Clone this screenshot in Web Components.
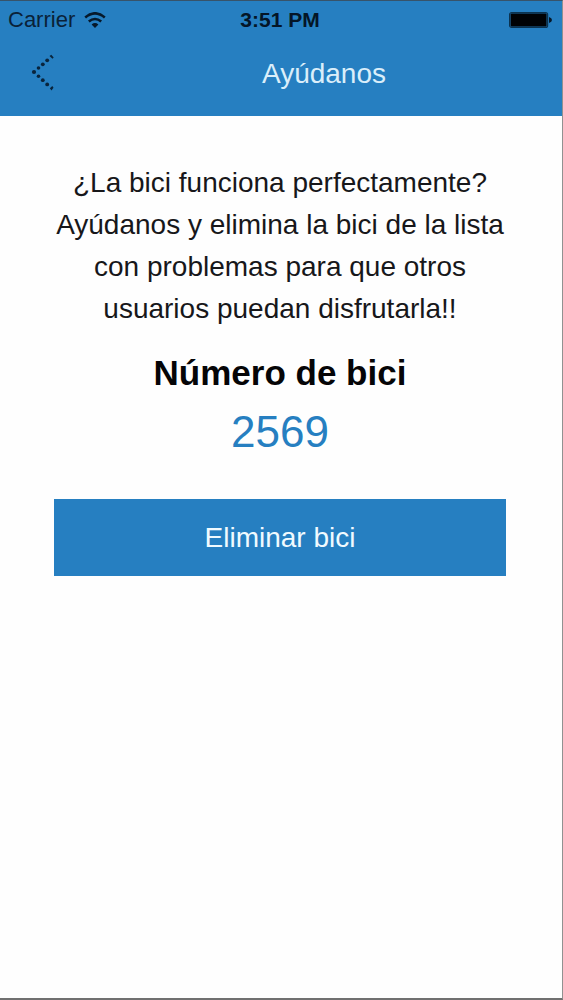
<!DOCTYPE html>
<html lang="es">
<head>
<meta charset="utf-8">
<meta name="viewport" content="width=device-width, initial-scale=1">
<title>Ayúdanos</title>
<style>
html, body {
  margin: 0;
}

body {
  font-family: "Liberation Sans", Arial, sans-serif;
  color: #17171a;
  background: #fefefe;
}
</style>
</head>
<body>
<bici-screen>
  <status-bar slot="header" carrier="Carrier" time="3:51 PM"></status-bar>
  <nav-bar slot="header">Ayúdanos</nav-bar>
  <remove-bike number="2569">
    ¿La bici funciona perfectamente? Ayúdanos y elimina la bici de la lista con problemas para que otros usuarios puedan disfrutarla!!
    <span slot="action">Eliminar bici</span>
  </remove-bike>
</bici-screen>

<script>
function attach(element, html) {
  const template = document.createElement('template');
  template.innerHTML = html;
  element.attachShadow({mode: 'open'});
  element.shadowRoot.appendChild(template.content.cloneNode(true));
}

class BiciScreen extends HTMLElement {
  constructor() {
    super();
    attach(this, `
<style>
:host {
  --blue: #267fc1;
  display: flex;
  flex-direction: column;
  box-sizing: border-box;
  min-height: 100vh;
  border-top: 1px solid #37536a;
  border-right: 1px solid #919191;
  border-bottom: 2px solid #707070;
}

header {
  background: var(--blue);
}
</style>
<header><slot name="header"></slot></header>
<main><slot></slot></main>
`);
  }
}

class StatusBar extends HTMLElement {
  constructor() {
    super();
    attach(this, `
<style>
:host {
  display: grid;
  grid-template-columns: 1fr auto 1fr;
  align-items: center;
  height: 38px;
  padding: 0 10px 0 8px;
  font-size: 22px;
  color: #0a2238;
}

.carrier {
  display: flex;
  align-items: center;
  gap: 9px;
}

.time {
  font-size: 21px;
  font-weight: bold;
  color: #041527;
}

.battery {
  justify-self: end;
}

svg {
  display: block;
}
</style>
<div class="carrier">
  <span id="carrier"></span>
  <svg width="22" height="17" viewBox="0 0 22 17" fill="none" stroke="#06192b" stroke-width="2.6" aria-hidden="true">
    <path d="M1.2 5.4Q11-2.8 20.8 5.4"/>
    <path d="M4.8 9.6Q11 4.4 17.2 9.6"/>
    <path d="M11 16L7.6 12.4Q11 9.6 14.4 12.4Z" fill="#06192b" stroke="none"/>
  </svg>
</div>
<span class="time" id="time"></span>
<svg class="battery" width="43" height="16" viewBox="0 0 43 16" aria-hidden="true">
  <rect x=".6" y=".6" width="38" height="14.8" rx="2" fill="none" stroke="#0b3350" stroke-width="1.2"/>
  <rect x="1.6" y="1.6" width="36" height="12.8" rx="1" fill="#000205"/>
  <path d="M40 5q3 1 3 3t-3 3z" fill="#06192b"/>
</svg>
`);
  }

  connectedCallback() {
    this.shadowRoot.getElementById('carrier').textContent = this.getAttribute('carrier');
    this.shadowRoot.getElementById('time').textContent = this.getAttribute('time');
  }
}

class NavBar extends HTMLElement {
  constructor() {
    super();
    attach(this, `
<style>
:host {
  display: grid;
  grid-template-columns: 86px 1fr;
  height: 77px;
}

button {
  display: flex;
  align-items: flex-start;
  justify-content: center;
  padding: 15px 0 0;
  border: 0;
  background: none;
  cursor: pointer;
}

h1 {
  margin: 0;
  padding-top: 19px;
  font-size: 28px;
  line-height: 32px;
  font-weight: normal;
  text-align: center;
  color: #daeefa;
}
</style>
<button type="button" aria-label="Volver">
  <svg width="24" height="38" viewBox="0 0 24 38" fill="#09243c">
    <circle cx="3" cy="18" r="2.1"/>
    <circle cx="7.5" cy="14" r="1.8"/>
    <circle cx="11.8" cy="10.3" r="1.9"/>
    <circle cx="16.2" cy="6.3" r="1.9"/>
    <path d="M18.5 2l1.8-1.3 2.4 2.8-1.2 1.2z"/>
    <circle cx="7.5" cy="22.2" r="1.8"/>
    <circle cx="11.8" cy="26.2" r="1.9"/>
    <circle cx="16.2" cy="30.4" r="1.9"/>
    <path d="M18.8 34.3l2.5-2.2 1.2 1.7-2 2.8z"/>
  </svg>
</button>
<h1><slot></slot></h1>
`);
  }
}

class RemoveBike extends HTMLElement {
  constructor() {
    super();
    attach(this, `
<style>
:host {
  display: block;
  padding: 46px 56px 40px 54px;
  text-align: center;
}

p, h2 {
  margin: 0;
}

p {
  font-size: 28px;
  line-height: 42px;
}

h2 {
  margin-top: 16px;
  font-size: 35px;
  line-height: 54px;
  color: #050507;
}

.number {
  font-size: 44px;
  line-height: 64px;
  color: var(--blue);
}

button {
  width: 100%;
  height: 77px;
  margin-top: 35px;
  border: 0;
  background: var(--blue);
  color: #f0faff;
  font-family: inherit;
  font-size: 28px;
  cursor: pointer;
}
</style>
<p><slot></slot></p>
<h2>Número de bici</h2>
<p class="number" id="number"></p>
<button type="button"><slot name="action"></slot></button>
`);
  }

  connectedCallback() {
    this.shadowRoot.getElementById('number').textContent = this.getAttribute('number');
  }
}

window.customElements.define('bici-screen', BiciScreen);
window.customElements.define('status-bar', StatusBar);
window.customElements.define('nav-bar', NavBar);
window.customElements.define('remove-bike', RemoveBike);
</script>
</body>
</html>
